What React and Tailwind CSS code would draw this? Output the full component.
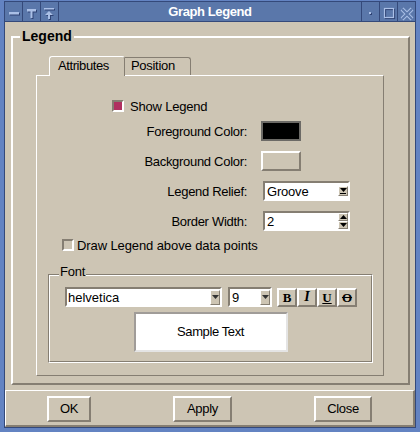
import React from 'react';

function Tri({ up = false, color = '#000' }) {
  return (
    <svg width="7" height="4" viewBox="0 0 7 4" className="block">
      {up ? <path d="M0 4H7L3.5 0Z" fill={color} /> : <path d="M0 0H7L3.5 4Z" fill={color} />}
    </svg>
  );
}

function TitleIcon({ kind }) {
  const light = '#aabfe6';
  const dark = '#2f4374';
  return (
    <svg width="17" height="19" viewBox="0 0 17 19" className="block">
      {kind === 'min' && (
        <g>
          <rect x="5" y="11" width="10" height="2.5" fill={dark} />
          <rect x="4" y="10" width="10" height="2.5" fill={light} />
        </g>
      )}
      {kind === 't' && (
        <g>
          <path d="M5 8H14V10.5H10.5V17H8.5V10.5H5Z" fill={dark} />
          <path d="M4 7H13V9.5H9.5V16H7.5V9.5H4Z" fill={light} />
        </g>
      )}
      {kind === 'raise' && (
        <g>
          <rect x="4" y="7" width="10" height="1.5" fill={dark} />
          <rect x="3" y="6" width="10" height="1.5" fill={light} />
          <path d="M9 10L13 14H10V18H8V14H5Z" fill={dark} />
          <path d="M8 9L12 13H9V17H7V13H4Z" fill={light} />
        </g>
      )}
      {kind === 'dot' && (
        <g>
          <rect x="8" y="11" width="2" height="2" fill={dark} />
          <rect x="7" y="10" width="2" height="2" fill={light} />
        </g>
      )}
      {kind === 'max' && (
        <g>
          <rect x="5.5" y="7.5" width="9" height="9" fill="none" stroke={dark} strokeWidth="1.2" />
          <rect x="4.5" y="6.5" width="9" height="9" fill="none" stroke={light} strokeWidth="1.2" />
        </g>
      )}
      {kind === 'close' && (
        <g>
          <path d="M4 7L14 17M14 7L4 17" stroke={light} strokeWidth="4" />
          <path d="M4 7L14 17M14 7L4 17" stroke="#5a77aa" strokeWidth="2" />
        </g>
      )}
    </svg>
  );
}

function Check({ checked }) {
  return checked ? (
    <div className="w-[12px] h-[12px] border-2 border-t-[#857e72] border-l-[#857e72] border-r-white border-b-white bg-[#b03060]" />
  ) : (
    <div className="w-[12px] h-[12px] border-2 border-t-[#857e72] border-l-[#857e72] border-r-white border-b-white bg-[#cdc5b4]" />
  );
}

function FormRow({ label, children, gap }) {
  return (
    <div className="flex items-center h-[20px]">
      <div className="w-[210px] text-right text-[13px] tracking-[-0.3px] leading-none">{label}</div>
      <div className={gap}>{children}</div>
    </div>
  );
}

function StyleBtn({ children }) {
  return (
    <div className="w-[20px] h-[19px] border-2 border-t-white border-l-white border-r-[#857e72] border-b-[#857e72] flex items-center justify-center font-['Liberation_Serif',serif] font-bold text-[13px] leading-none">
      {children}
    </div>
  );
}

function Button({ w, children }) {
  return (
    <div className={`${w} h-[26px] border-2 border-t-white border-l-white border-r-[#857e72] border-b-[#857e72] flex items-center justify-center text-[13px] tracking-[-0.3px]`}>
      {children}
    </div>
  );
}

export default function App() {
  return (
    <div className="w-[420px] h-[432px] bg-[#6383c2] pt-[1px] px-[4px] pb-[4px] font-['Liberation_Sans',Arial,sans-serif] text-black">
      <div className="w-full h-full border border-[#34497a] flex flex-col">
        {/* title bar */}
        <div className="h-[20px] border-b border-[#34497a] bg-[#5a77aa] flex">
          <div className="w-[18px] border-r border-[#34497a]"><TitleIcon kind="min" /></div>
          <div className="w-[18px] border-r border-[#34497a]"><TitleIcon kind="t" /></div>
          <div className="w-[18px] border-r border-[#34497a]"><TitleIcon kind="raise" /></div>
          <div className="flex-1 flex items-center justify-center text-white font-bold text-[13px] tracking-[-0.4px] leading-none">
            Graph Legend
          </div>
          <div className="w-[18px] border-l border-[#34497a]"><TitleIcon kind="dot" /></div>
          <div className="w-[18px] border-l border-[#34497a]"><TitleIcon kind="max" /></div>
          <div className="w-[18px] border-l border-[#34497a]"><TitleIcon kind="close" /></div>
        </div>

        {/* content */}
        <div className="flex-1 bg-[#cdc5b4] flex flex-col">
          <div className="h-[368px] pt-[14px] pl-[6px]">
            {/* Legend frame */}
            <div className="relative w-[399px] h-[349px] border-2 border-t-white border-l-white border-r-[#857e72] border-b-[#857e72]">
              <div className="absolute -top-[10px] left-[7px] px-[2px] bg-[#cdc5b4] text-[14px] font-bold leading-[16px]">
                Legend
              </div>
              {/* notebook */}
              <div className="ml-[23px] mt-[18px] w-[348px] flex flex-col">
                <div className="flex items-end h-[19px] pl-[13px]">
                  <div className="relative z-10 w-[76px] h-[20px] -mb-px bg-[#cdc5b4] border-l border-t border-r border-l-white border-t-white border-r-[#857e72] rounded-t-[3px] text-[13px] tracking-[-0.4px] pl-[8px] leading-[17px]">
                    Attributes
                  </div>
                  <div className="w-[66px] h-[18px] border-t border-r border-[#857e72] rounded-tr-[3px] text-[13px] tracking-[-0.3px] pl-[6px] leading-[15px]">
                    Position
                  </div>
                </div>
                <div className="h-[301px] border border-t-white border-l-white border-r-[#857e72] border-b-[#857e72] flex flex-col">
                  {/* Show legend */}
                  <div className="mt-[20px] h-[20px] flex items-center pl-[75px]">
                    <Check checked />
                    <span className="ml-[6px] text-[13px] tracking-[-0.2px] leading-none">Show Legend</span>
                  </div>
                  <div className="mt-[5px]">
                    <FormRow label="Foreground Color:" gap="ml-[14px]">
                      <div className="w-[40px] h-[20px] border-2 border-[#6c6a66] bg-black" />
                    </FormRow>
                  </div>
                  <div className="mt-[10px]">
                    <FormRow label="Background Color:" gap="ml-[14px]">
                      <div className="w-[40px] h-[20px] border-2 border-t-white border-l-white border-r-[#857e72] border-b-[#857e72] bg-[#cdc5b4]" />
                    </FormRow>
                  </div>
                  <div className="mt-[10px]">
                    <FormRow label="Legend Relief:" gap="ml-[16px]">
                      <div className="w-[87px] h-[20px] border-2 border-t-[#857e72] border-l-[#857e72] border-r-white border-b-white bg-white flex items-center">
                        <span className="pl-[2px] text-[13px] tracking-[-0.2px] leading-none">Groove</span>
                        <div className="ml-auto w-[10px] h-[10px] bg-[#cdc5b4] border-t border-l border-t-white border-l-white border-r border-b border-r-[#857e72] border-b-[#857e72] flex flex-col items-center justify-center gap-[1px]">
                          <Tri />
                          <div className="w-[6px] h-px bg-black" />
                        </div>
                      </div>
                    </FormRow>
                  </div>
                  <div className="mt-[10px]">
                    <FormRow label="Border Width:" gap="ml-[16px]">
                      <div className="w-[87px] h-[20px] border-2 border-t-[#857e72] border-l-[#857e72] border-r-white border-b-white bg-white flex items-center">
                        <span className="pl-[2px] text-[13px] leading-none">2</span>
                        <div className="ml-auto flex flex-col">
                          <div className="w-[10px] h-[8px] bg-[#cdc5b4] border-t border-l border-t-white border-l-white border-r border-b border-r-[#857e72] border-b-[#857e72] flex items-center justify-center">
                            <Tri up />
                          </div>
                          <div className="w-[10px] h-[8px] bg-[#cdc5b4] border-t border-l border-t-white border-l-white border-r border-b border-r-[#857e72] border-b-[#857e72] flex items-center justify-center">
                            <Tri />
                          </div>
                        </div>
                      </div>
                    </FormRow>
                  </div>
                  {/* Draw legend */}
                  <div className="mt-[4px] h-[20px] flex items-center pl-[25px]">
                    <Check />
                    <span className="ml-[3px] text-[13px] tracking-[-0.1px] leading-none">Draw Legend above data points</span>
                  </div>
                  {/* Font frame */}
                  <div className="mt-[19px] ml-[11px] w-[325px] h-[89px] border border-t-[#857e72] border-l-[#857e72] border-r-white border-b-white">
                    <div className="relative w-full h-full border border-t-white border-l-white border-r-[#857e72] border-b-[#857e72]">
                      <div className="absolute -top-[11px] left-[9px] px-[1px] bg-[#cdc5b4] text-[13px] tracking-[-0.2px] leading-[14px]">
                        Font
                      </div>
                      <div className="mt-[11px] ml-[15px] flex items-center">
                        <div className="w-[157px] h-[20px] border-2 border-t-[#857e72] border-l-[#857e72] border-r-white border-b-white bg-white flex items-center">
                          <span className="pl-[1px] text-[13px] leading-none">helvetica</span>
                          <div className="ml-auto w-[10px] h-[15px] bg-[#cdc5b4] border-t border-l border-t-white border-l-white border-r border-b border-r-[#857e72] border-b-[#857e72] flex items-center justify-center">
                            <Tri color="#333" />
                          </div>
                        </div>
                        <div className="ml-[6px] w-[44px] h-[20px] border-2 border-t-[#857e72] border-l-[#857e72] border-r-white border-b-white bg-white flex items-center">
                          <span className="pl-[2px] text-[13px] leading-none">9</span>
                          <div className="ml-auto w-[10px] h-[15px] bg-[#cdc5b4] border-t border-l border-t-white border-l-white border-r border-b border-r-[#857e72] border-b-[#857e72] flex items-center justify-center">
                            <Tri color="#333" />
                          </div>
                        </div>
                        <div className="ml-[5px] flex">
                          <StyleBtn>B</StyleBtn>
                          <StyleBtn><span className="italic text-[14px]">I</span></StyleBtn>
                          <StyleBtn><span className="underline">U</span></StyleBtn>
                          <StyleBtn><span className="line-through">O</span></StyleBtn>
                        </div>
                      </div>
                      <div className="mt-[5px] mx-auto w-[154px] h-[40px] border-2 border-t-[#a09c98] border-l-[#a09c98] border-r-[#e4e4e4] border-b-[#e4e4e4] bg-white flex items-center justify-center text-[13px] tracking-[-0.4px]">
                        Sample Text
                      </div>
                    </div>
                  </div>
                </div>
              </div>
            </div>
          </div>
          {/* buttons */}
          <div className="flex-1 border-t border-l border-t-white border-l-white border-r-2 border-b-2 border-r-[#857e72] border-b-[#857e72] flex items-start pt-[5px] pl-[41px] gap-[82px]">
            <Button w="w-[44px]">OK</Button>
            <Button w="w-[59px]">Apply</Button>
            <Button w="w-[58px]">Close</Button>
          </div>
        </div>
      </div>
    </div>
  );
}
